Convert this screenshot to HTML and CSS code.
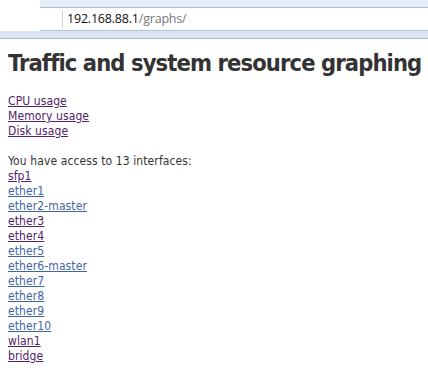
FILE: index.html
```html
<!DOCTYPE html>
<html>
<head>
  <title>Graphs</title>
  <link rel="stylesheet" href="styles.css">
</head>
<body>

  <div class="chrome">
    <div class="chrome-top">
      <div class="chrome-left"></div>
      <div class="chrome-main">
        <div class="tabstrip"></div>
        <div class="address">
          <span class="url"><span class="host">192.168.88.1</span>/graphs/</span>
        </div>
      </div>
    </div>
    <div class="chrome-bottom"></div>
  </div>

  <div class="content">
    <h1>Traffic and system resource graphing</h1>

    <p>
      <a class="visited" href="#">CPU usage</a><br>
      <a class="visited" href="#">Memory usage</a><br>
      <a class="visited" href="#">Disk usage</a>
    </p>

    <p>
      You have access to 13 interfaces:<br>
      <a class="visited" href="#">sfp1</a><br>
      <a href="#">ether1</a><br>
      <a href="#">ether2-master</a><br>
      <a class="visited" href="#">ether3</a><br>
      <a class="visited" href="#">ether4</a><br>
      <a href="#">ether5</a><br>
      <a href="#">ether6-master</a><br>
      <a href="#">ether7</a><br>
      <a href="#">ether8</a><br>
      <a href="#">ether9</a><br>
      <a href="#">ether10</a><br>
      <a class="visited" href="#">wlan1</a><br>
      <a class="visited" href="#">bridge</a>
    </p>
  </div>

</body>
</html>
```

FILE: styles.css
```css
body {
  margin: 0;
  padding: 0;
  background: #fff;
  color: #333;
  font-family: "DejaVu Sans Condensed", "DejaVu Sans", sans-serif;
  font-size: 12px;
  line-height: 15px;
  letter-spacing: 0.1px;
}

/* browser chrome strip */
.chrome-top {
  display: flex;
  height: 31px;
}
.chrome-left {
  width: 40px;
  background: #fff;
}
.chrome-main {
  flex: 1;
  display: flex;
  flex-direction: column;
}
.tabstrip {
  height: 7px;
  background: #e6eef9;
  border-bottom: 1px solid #b3c0d0;
}
.address {
  flex: 1;
  background: #fff;
  border-bottom: 1px solid #b3c0d0;
  display: flex;
  align-items: center;
  padding-left: 22px;
}
.url {
  border-left: 1px solid #d4d4d4;
  padding-left: 4px;
  font-family: "Open Sans", sans-serif;
  font-size: 12.5px;
  line-height: 18px;
  color: #777;
  letter-spacing: -0.2px;
}
.host {
  color: #111;
}
.chrome-bottom {
  height: 7px;
  background: #dde7f4;
  border-bottom: 1px solid #aab7c7;
}

.content {
  padding: 0 8px;
}
h1 {
  font-size: 23.5px;
  line-height: 34px;
  font-weight: bold;
  letter-spacing: -0.9px;
  white-space: nowrap;
  color: #333;
  margin: 7px 0 14px 0;
}
p {
  margin: 0 0 15px 0;
}
a {
  color: #3f65a3;
}
a.visited {
  color: #512468;
}
```
